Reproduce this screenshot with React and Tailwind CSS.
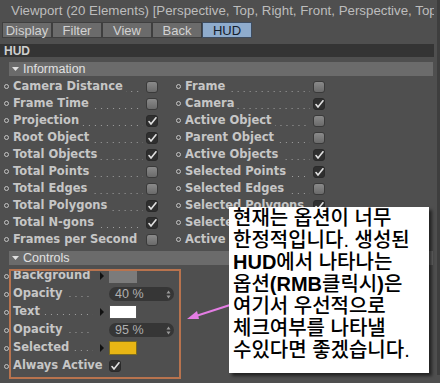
import React from "react";

const uiFont = { fontFamily: '"DejaVu Sans", sans-serif' };
const arial = { fontFamily: '"Liberation Sans", Arial, sans-serif' };
const korean = { fontFamily: '"Liberation Sans", "Noto Sans CJK KR", sans-serif' };

const infoRows = [
  ["Camera Distance", false, "Frame", false],
  ["Frame Time", false, "Camera", true],
  ["Projection", true, "Active Object", false],
  ["Root Object", true, "Parent Object", false],
  ["Total Objects", true, "Active Objects", true],
  ["Total Points", false, "Selected Points", true],
  ["Total Edges", false, "Selected Edges", false],
  ["Total Polygons", true, "Selected Polygons", true],
  ["Total N-gons", true, "Selected Objects", false],
  ["Frames per Second", false, "Active Tool", false],
];

function Bullet() {
  return <span className="h-[5px] w-[5px] shrink-0 rounded-full border border-[#c4c4c4]" />;
}

function Leader() {
  return (
    <span className="mb-[3px] ml-[3px] mr-[3px] h-px flex-1 self-end bg-[linear-gradient(to_right,#a0a0a0_1px,transparent_1px)] bg-[length:6px_1px] bg-right bg-repeat-x" />
  );
}

function Check({ checked }) {
  if (checked) {
    return (
      <span className="flex h-[12px] w-[12px] shrink-0 items-center justify-center rounded-[3px] border border-[#2a2a2a] bg-[#2f2f2f]">
        <svg width="9" height="8" viewBox="0 0 9 8">
          <path d="M1 4.5 L3 7 L8 0.8" fill="none" stroke="#e0e0e0" strokeWidth="1.6" strokeLinecap="round" />
        </svg>
      </span>
    );
  }
  return (
    <span className="h-[12px] w-[12px] shrink-0 rounded-[3px] border border-[#3a3a3a] bg-[linear-gradient(#8a8a8a,#6a6a6a)]" />
  );
}

function InfoItem({ label, checked, width }) {
  return (
    <div className={`flex h-[17px] items-center ${width}`}>
      <Bullet />
      <span className="ml-[4px] whitespace-nowrap text-[11.5px] font-bold leading-none text-[#c6c6c6]">{label}</span>
      <Leader />
      <Check checked={checked} />
    </div>
  );
}

function Arrow() {
  return <span className="h-0 w-0 border-y-[4px] border-l-[4px] border-y-transparent border-l-[#111]" />;
}

function Spinner({ value }) {
  return (
    <div className="flex h-[14px] w-[65px] items-center justify-between rounded-[7px] bg-[#363636] pl-[6px] pr-[3px]">
      <span className="text-[12.5px] leading-none text-[#b0b0b0]" style={arial}>{value}</span>
      <svg width="5" height="9" viewBox="0 0 5 9">
        <path d="M0.5 3.5 L2.5 0.5 L4.5 3.5 Z M0.5 5.5 L2.5 8.5 L4.5 5.5 Z" fill="#9a9a9a" />
      </svg>
    </div>
  );
}

function ControlRow({ label, dots = true, arrow = false, children }) {
  return (
    <div className="flex h-[18px] items-center">
      <Bullet />
      <div className="ml-[4px] flex w-[83px] items-center">
        <span className="whitespace-nowrap text-[11.5px] font-bold leading-none text-[#c6c6c6]">{label}</span>
        {dots ? <Leader /> : null}
      </div>
      <div className="flex w-[13px] items-center pl-[4px]">{arrow ? <Arrow /> : null}</div>
      {children}
    </div>
  );
}

function ClapIcon() {
  return (
    <svg width="16" height="17" viewBox="0 0 16 17">
      <rect x="0.5" y="0.5" width="15" height="16" rx="2" fill="#b44a24" stroke="#5a2a16" />
      <rect x="1" y="1" width="14" height="4" fill="#f2f2f2" />
      <path d="M1 8.5 H15 M1 11.5 H15 M1 14.5 H15 M4 5 V16 M8 5 V16 M12 5 V16" stroke="#7a2e14" strokeWidth="0.8" />
    </svg>
  );
}

export default function App() {
  const tabs = ["Display", "Filter", "View", "Back", "HUD"];

  return (
    <div className="relative h-[383px] w-[440px] overflow-hidden bg-[#4f4f4f]" style={uiFont}>
      <div className="border-r-[3px] border-[#3e3e3e] pr-[3px]">
        {/* title bar */}
        <div className="flex h-[22px] items-center gap-[7px] overflow-hidden pl-[4px]">
          <ClapIcon />
          <span className="whitespace-nowrap text-[13.3px] text-[#bdbdbd]" style={arial}>
            Viewport (20 Elements) [Perspective, Top, Right, Front, Perspective, Top]
          </span>
        </div>

        {/* tabs */}
        <div className="flex h-[16px] pl-[2px]">
          {tabs.map((tab) => (
            <div
              key={tab}
              className={`flex w-[50px] items-center justify-center border text-[13px] leading-none ${
                tab === "HUD"
                  ? "border-[#3d4c60] bg-[#8faccd] text-[#14202e]"
                  : "border-[#3f3f3f] bg-[#6b6b6b] text-[#d2d2d2]"
              }`}
              style={arial}
            >
              {tab}
            </div>
          ))}
        </div>

        {/* HUD header */}
        <div className="mt-[6px] flex h-[13px] w-[434px] items-center bg-[#343434] pl-[4px]">
          <span className="text-[12px] font-bold leading-none text-[#cfcfcf]" style={arial}>HUD</span>
        </div>

        {/* Information header */}
        <div className="ml-[9px] mt-[5px] flex h-[14px] w-[424px] items-center gap-[4px] bg-[#6b6b6b] pl-[3px]">
          <svg width="7" height="4" viewBox="0 0 7 4">
            <path d="M0 0 H7 L3.5 4 Z" fill="#e0e0e0" />
          </svg>
          <span className="text-[12.5px] leading-none text-[#e0e0e0]" style={arial}>Information</span>
        </div>

        <div className="mt-[2px] pl-[4px]">
          {infoRows.map(([l, lc, r, rc]) => (
            <div key={l} className="flex gap-[18px]">
              <InfoItem label={l} checked={lc} width="w-[154px]" />
              <InfoItem label={r} checked={rc} width="w-[149px]" />
            </div>
          ))}
        </div>

        {/* Controls header */}
        <div className="ml-[9px] mt-[3px] flex h-[14px] w-[424px] items-center gap-[4px] bg-[#6b6b6b] pl-[3px]">
          <svg width="7" height="4" viewBox="0 0 7 4">
            <path d="M0 0 H7 L3.5 4 Z" fill="#e0e0e0" />
          </svg>
          <span className="text-[12.5px] leading-none text-[#e0e0e0]" style={arial}>Controls</span>
        </div>

        <div className="mt-[2px] pl-[4px]">
          <ControlRow label="Background" dots={false} arrow>
            <span className="h-[14px] w-[28px] bg-[#7b7b7b]" />
          </ControlRow>
          <ControlRow label="Opacity">
            <Spinner value="40 %" />
          </ControlRow>
          <ControlRow label="Text" arrow>
            <span className="h-[14px] w-[28px] border border-[#555] bg-white" />
          </ControlRow>
          <ControlRow label="Opacity">
            <Spinner value="95 %" />
          </ControlRow>
          <ControlRow label="Selected" arrow>
            <span className="h-[14px] w-[28px] border border-[#7a6a20] bg-[#e9b614]" />
          </ControlRow>
          <ControlRow label="Always Active" dots={false}>
            <Check checked />
          </ControlRow>
        </div>
      </div>

      {/* annotation: orange frame */}
      <div className="absolute left-[9px] top-[269px] h-[110px] w-[172px] border-2 border-[#b8734e]" />

      {/* annotation: arrow */}
      <svg className="absolute left-[184px] top-[298px]" width="50" height="26" viewBox="0 0 50 26">
        <path d="M46 7 L12 18" stroke="#e47de4" strokeWidth="2" />
        <path d="M3 21 L13 13 L15 21 Z" fill="#e47de4" />
      </svg>

      {/* annotation: callout */}
      <div
        className="absolute left-[229px] top-[207px] h-[166px] w-[200px] bg-white pl-[4px] text-[20px] font-medium leading-[22px] text-black shadow-[3px_3px_3px_rgba(0,0,0,0.55)]"
        style={korean}
      >
        <div>현재는 옵션이 너무</div>
        <div>한정적입니다. 생성된</div>
        <div>
          <b>HUD</b>에서 나타나는
        </div>
        <div>
          옵션<b>(RMB</b>클릭시<b>)</b>은
        </div>
        <div>여기서 우선적으로</div>
        <div>체크여부를 나타낼</div>
        <div>수있다면 좋겠습니다.</div>
      </div>
    </div>
  );
}
